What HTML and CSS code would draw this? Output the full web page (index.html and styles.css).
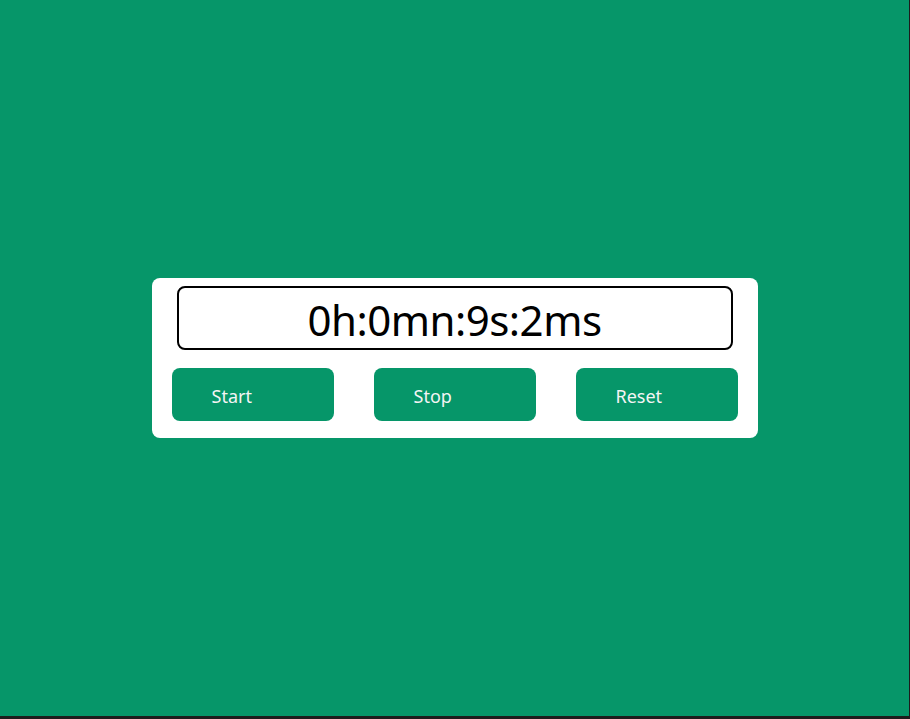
FILE: index.html
```html
<!DOCTYPE html>
<html>
<head>
<meta charset="utf-8">
<link rel="stylesheet" href="styles.css">
</head>
<body>
<main class="page">
  <section class="card">
    <div class="display">0h:0mn:9s:2ms</div>
    <div class="buttons">
      <button class="btn">Start</button>
      <button class="btn">Stop</button>
      <button class="btn">Reset</button>
    </div>
  </section>
</main>
</body>
</html>
```
FILE: styles.css
```css
html, body {
  margin: 0;
  padding: 0;
  background: #1c1c1c;
  width: 910px;
  height: 719px;
  overflow: hidden;
}
.page {
  width: 909px;
  height: 716px;
  background: #069669;
  display: flex;
  align-items: center;
  justify-content: center;
  font-family: "Noto Sans", "Open Sans", sans-serif;
}
.card {
  width: 606px;
  box-sizing: border-box;
  background: #ffffff;
  border-radius: 8px;
  padding: 8px 20px 17px;
}
.display {
  box-sizing: border-box;
  height: 64px;
  margin: 0 5px;
  border: 2px solid #000;
  border-radius: 8px;
  display: flex;
  align-items: center;
  justify-content: center;
  font-size: 42px;
  letter-spacing: -0.5px;
  color: #000;
  line-height: 1;
  padding-top: 4px;
}
.buttons {
  display: flex;
  justify-content: space-between;
  margin-top: 18px;
}
.btn {
  width: 162px;
  height: 53px;
  border: none;
  border-radius: 8px;
  background: #069669;
  color: #f4f4f4;
  font-family: "Noto Sans", "Open Sans", sans-serif;
  font-size: 18px;
  text-align: left;
  padding: 2px 0 0 40px;
}
```
